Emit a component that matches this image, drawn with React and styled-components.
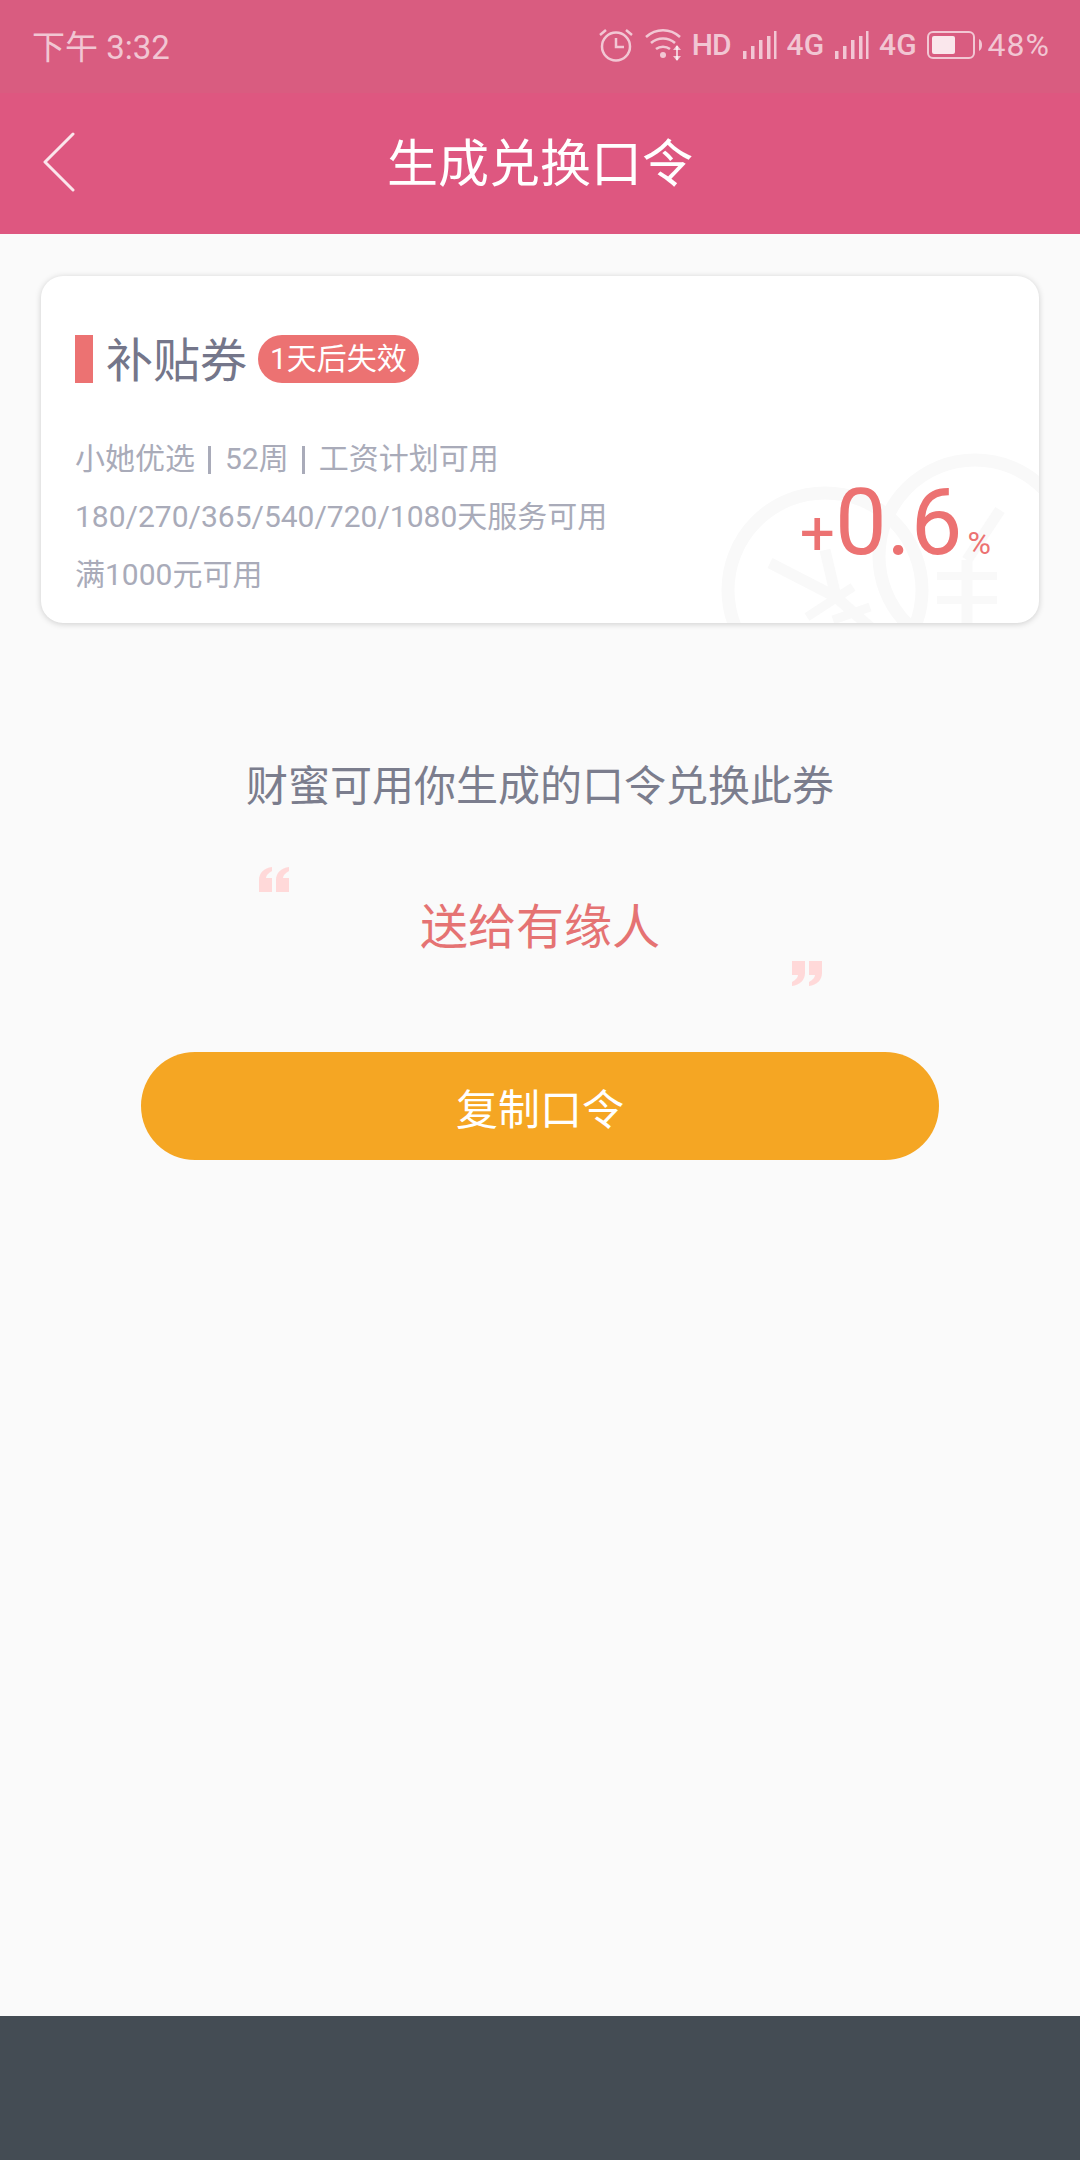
import React from 'react';
import styled, {createGlobalStyle} from 'styled-components';

const FONT = `Roboto, 'Noto Sans CJK SC', sans-serif`;

const GlobalStyle = createGlobalStyle`
  html, body {
    margin: 0;
    padding: 0;
    background: #fafafa;
  }
  * {
    box-sizing: border-box;
  }
`;

const Page = styled.div`
  display: flex;
  flex-direction: column;
  width: 1080px;
  height: 2160px;
  font-family: ${FONT};
  background: #fafafa;
`;
const Header = styled.header`
  background: #de5780;
`;
const StatusBar = styled.div`
  display: flex;
  align-items: center;
  justify-content: space-between;
  height: 93px;
  padding: 0 30px 3px 32px;
  background: #d95c80;
  color: rgba(255, 255, 255, 0.66);
  font-size: 33px;
`;
const StatusRight = styled.div`
  display: flex;
  align-items: center;
`;
const StatusLabel = styled.span`
  margin-left: ${(p) => p.$left || 0}px;
  font-size: ${(p) => p.$size || 30}px;
  font-weight: ${(p) => p.$weight || 500};
  letter-spacing: ${(p) => p.$spacing || 0}px;
  line-height: 34px;
`;
const StatusIcon = styled.svg`
  display: block;
  flex: none;
  margin-left: ${(p) => p.$left || 0}px;
`;
const TitleBar = styled.div`
  display: grid;
  grid-template-columns: 150px 1fr 150px;
  align-items: center;
  height: 141px;
  padding-bottom: 7px;
`;
const BackIcon = styled.svg`
  display: block;
  margin: 3px 0 0 42px;
`;
const Title = styled.h1`
  margin: 0;
  color: #ffffff;
  font-size: 51px;
  font-weight: 400;
  text-align: center;
`;
const Content = styled.main`
  display: flex;
  flex: 1;
  flex-direction: column;
  align-items: center;
  padding: 42px 41px 0;
`;
const Coupon = styled.section`
  position: relative;
  overflow: hidden;
  width: 998px;
  height: 347px;
  padding: 59px 34px 0;
  border-radius: 22px;
  background: #ffffff;
  box-shadow: 0 1px 6px rgba(0, 0, 0, 0.18);
`;
const Watermark = styled.svg`
  position: absolute;
  right: 0;
  bottom: 0;
`;
const CouponHead = styled.div`
  position: relative;
  display: flex;
  align-items: center;
  height: 48px;
`;
const Marker = styled.i`
  display: block;
  width: 18px;
  height: 48px;
  margin-right: 13px;
  background: #ec7272;
`;
const CouponName = styled.span`
  margin-top: 3px;
  color: #74768a;
  font-size: 47px;
  line-height: 48px;
`;
const Expiry = styled.span`
  height: 48px;
  margin-left: 11px;
  padding: 0 12px;
  border-radius: 24px;
  background: #ec7272;
  color: #ffffff;
  font-size: 30px;
  line-height: 48px;
`;
const Rules = styled.div`
  position: relative;
  margin-top: 47px;
  color: #a9abb9;
  font-size: 30px;
`;
const Rule = styled.div`
  height: 58px;
  line-height: 58px;
`;
const Separator = styled.i`
  display: inline-block;
  width: 3px;
  height: 28px;
  margin: 0 14px 0 13px;
  background: #a9abb9;
  vertical-align: -5px;
`;
const Bonus = styled.div`
  position: absolute;
  right: 48px;
  bottom: 54px;
  display: flex;
  align-items: baseline;
  color: #ec7272;
  line-height: 1;
`;
const BonusPart = styled.span`
  margin-left: ${(p) => p.$left || 0}px;
  font-size: ${(p) => p.$size}px;
`;
const Hint = styled.p`
  margin: 134px 0 0;
  color: #7b7d8d;
  font-size: 42px;
  line-height: 60px;
`;
const Phrase = styled.div`
  display: grid;
  grid-template-columns: 30px 1fr 30px;
  row-gap: 3px;
  width: 563px;
  margin-top: 50px;
`;
const Quote = styled.svg`
  display: block;
  grid-column: ${(p) => (p.$end ? 3 : 1)};
  grid-row: ${(p) => (p.$end ? 2 : 1)};
`;
const PhraseText = styled.div`
  margin-top: 31px;
  color: #e57373;
  font-size: 48px;
  line-height: 60px;
  text-align: center;
  grid-column: 2;
  grid-row: 1;
`;
const CopyButton = styled.button`
  display: block;
  width: 798px;
  height: 108px;
  margin-top: 66px;
  padding: 0;
  border: 0;
  border-radius: 54px;
  background: #f5a623;
  color: #ffffff;
  font-family: ${FONT};
  font-size: 42px;
`;
const NavBar = styled.div`
  flex: none;
  height: 144px;
  background: #444c54;
`;

const Signal = () => (
  <>
    <rect x="0" y="20" width="3.5" height="8" />
    <rect x="8" y="15" width="3.5" height="13" />
    <rect x="16" y="9" width="3.5" height="19" />
    <rect x="24" y="5" width="3.5" height="23" />
    <rect x="31" y="0" width="2.5" height="28" />
  </>
);

const StatusIcons = () => (
  <StatusRight>
    <StatusIcon width="36" height="36" viewBox="0 0 36 36" fill="none" stroke="currentColor" strokeWidth="2.5">
      <circle cx="18" cy="19.5" r="14" />
      <path d="M18 11v9h8M2 8l6-5M34 8l-6-5" />
    </StatusIcon>
    <StatusIcon $left={10} width="40" height="34" viewBox="0 0 40 34" fill="none" stroke="currentColor" strokeWidth="2.6">
      <path d="M2 9C12 0 26 0 36 9M7 15c7-6 17-6 24 0M12 21c4-3 10-3 14 0" />
      <circle cx="19" cy="27" r="3" fill="currentColor" stroke="none" />
      <path d="M33 18v14" strokeWidth="2" />
      <path d="M29 22l4-5 4 5zM29 28l4 5 4-5z" fill="currentColor" stroke="none" />
    </StatusIcon>
    <StatusLabel $left={8} $spacing={-1}>HD</StatusLabel>
    <StatusIcon $left={12} width="34" height="28" viewBox="0 0 34 28" fill="currentColor"><Signal /></StatusIcon>
    <StatusLabel $left={10}>4G</StatusLabel>
    <StatusIcon $left={11} width="34" height="28" viewBox="0 0 34 28" fill="currentColor"><Signal /></StatusIcon>
    <StatusLabel $left={10}>4G</StatusLabel>
    <StatusIcon $left={10} width="56" height="28" viewBox="0 0 56 28" fill="none">
      <rect x="1" y="1" width="46" height="26" rx="5" stroke="currentColor" strokeWidth="2" />
      <rect x="5" y="5" width="23" height="18" rx="2" fill="#ffffff" fillOpacity="0.85" />
      <path d="M52 8c2 1 3 3 3 6s-1 5-3 6z" fill="currentColor" />
    </StatusIcon>
    <StatusLabel $left={5} $size={32} $weight={400} $spacing={1}>48%</StatusLabel>
  </StatusRight>
);

const App = () => (
  <Page>
    <GlobalStyle />
    <Header>
      <StatusBar>
        <span>下午 3:32</span>
        <StatusIcons />
      </StatusBar>
      <TitleBar>
        <BackIcon width="34" height="60" viewBox="0 0 34 60" fill="none" stroke="#fbe6ec" strokeWidth="3" strokeLinecap="round" strokeLinejoin="round">
          <path d="M31 2L3 30l28 28" />
        </BackIcon>
        <Title>生成兑换口令</Title>
      </TitleBar>
    </Header>
    <Content>
      <Coupon>
        <Watermark width="320" height="175" viewBox="0 0 320 175" fill="none" stroke="#f9f9f9" strokeWidth="13">
          <circle cx="106" cy="142" r="97" />
          <circle cx="256" cy="108" r="96" />
          <path d="M51 115l66 34M106 102l11 47 34 30" strokeWidth="11" />
          <path d="M88 169l46-30M114 172l37-13" strokeWidth="9" />
          <path d="M281 62l-33 50M248 112v63" strokeWidth="11" />
          <path d="M218 128h60M218 152h60" strokeWidth="8" />
        </Watermark>
        <CouponHead>
          <Marker />
          <CouponName>补贴券</CouponName>
          <Expiry>1天后失效</Expiry>
        </CouponHead>
        <Rules>
          <Rule>小她优选<Separator />52周<Separator />工资计划可用</Rule>
          <Rule>180/270/365/540/720/1080天服务可用</Rule>
          <Rule>满1000元可用</Rule>
        </Rules>
        <Bonus>
          <BonusPart $size={62}>+</BonusPart>
          <BonusPart $size={92}>0.6</BonusPart>
          <BonusPart $left={5} $size={32}>%</BonusPart>
        </Bonus>
      </Coupon>
      <Hint>财蜜可用你生成的口令兑换此券</Hint>
      <Phrase>
        <Quote width="30" height="25" viewBox="0 0 30 25" fill="#ffd9d9">
          <path d="M0 25V13C0 6 5 1 13 0v4C9 6 7 9 7 11h6v14zM17 25V13C17 6 22 1 30 0v4c-4 2-6 5-6 7h6v14z" />
        </Quote>
        <PhraseText>送给有缘人</PhraseText>
        <Quote $end width="30" height="25" viewBox="0 0 30 25" fill="#ffd9d9">
          <path d="M30 0v12c0 7-5 12-13 13v-4c4-2 6-5 6-7h-6V0zM13 0v12c0 7-5 12-13 13v-4c4-2 6-5 6-7H0V0z" />
        </Quote>
      </Phrase>
      <CopyButton>复制口令</CopyButton>
    </Content>
    <NavBar />
  </Page>
);

export default App;
